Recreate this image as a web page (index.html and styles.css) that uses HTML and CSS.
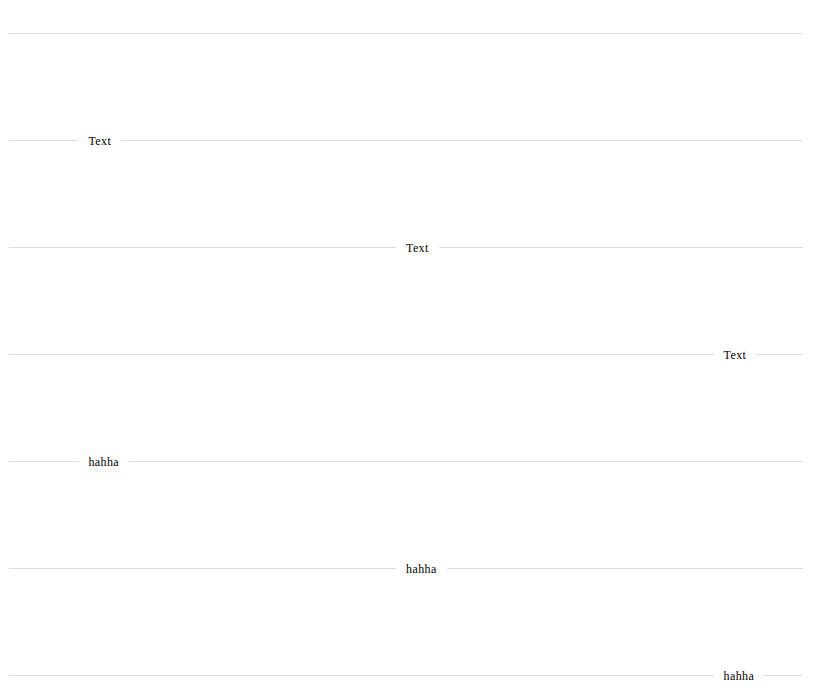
FILE: index.html
```html
<!DOCTYPE html>
<html>
<head>
<meta charset="utf-8">
<link rel="stylesheet" href="styles.css">
</head>
<body>
<div class="page">
  <div class="divider"><span class="line line-full"></span></div>
  <div class="divider pos-left"><span class="line line-before"></span><span class="label">Text</span><span class="line line-after"></span></div>
  <div class="divider pos-center"><span class="line line-before"></span><span class="label">Text</span><span class="line line-after"></span></div>
  <div class="divider pos-right"><span class="line line-before"></span><span class="label">Text</span><span class="line line-after"></span></div>
  <div class="divider pos-left"><span class="line line-before"></span><span class="label">hahha</span><span class="line line-after"></span></div>
  <div class="divider pos-center"><span class="line line-before"></span><span class="label">hahha</span><span class="line line-after"></span></div>
  <div class="divider pos-right"><span class="line line-before"></span><span class="label">hahha</span><span class="line line-after"></span></div>
</div>
</body>
</html>
```
FILE: styles.css
```css
html, body {
  margin: 0;
  padding: 0;
  background: #ffffff;
}

.page {
  width: 794px;
  margin-left: 9px;
  padding-top: 26px;
  display: flex;
  flex-direction: column;
  gap: 92px;
}

.divider {
  display: flex;
  align-items: center;
  height: 15px;
}

.line {
  display: block;
  height: 1px;
  background: #dcdcdc;
}

.line-full {
  flex: 1;
}

.line-after {
  flex: 1;
}

.pos-left .line-before {
  width: calc(10% - 10px);
}

.pos-center .line-before {
  width: calc(50% - 10px);
}

.pos-right .line-before {
  width: calc(90% - 10px);
}

.label {
  padding: 0 10px;
  font-family: "Liberation Serif", "DejaVu Serif", serif;
  font-size: 12px;
  letter-spacing: 0.4px;
  line-height: 15px;
  color: #000000;
  white-space: nowrap;
  position: relative;
  top: 1px;
}
```
